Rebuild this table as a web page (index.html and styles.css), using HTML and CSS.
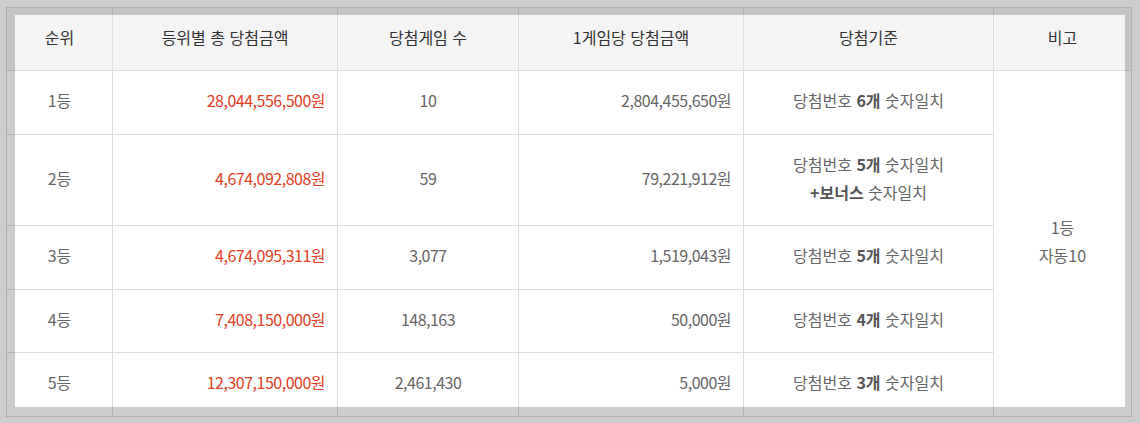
FILE: index.html
```html
<!DOCTYPE html>
<html lang="ko">
<head>
<meta charset="utf-8">
<title>당첨금 지급 내역</title>
<link rel="stylesheet" href="styles.css">
</head>
<body>
<div class="page">
  <table class="prize">
    <colgroup>
      <col class="c-rank">
      <col class="c-total">
      <col class="c-count">
      <col class="c-each">
      <col class="c-rule">
      <col class="c-note">
    </colgroup>
    <thead>
      <tr>
        <th>순위</th>
        <th>등위별 총 당첨금액</th>
        <th>당첨게임 수</th>
        <th>1게임당 당첨금액</th>
        <th>당첨기준</th>
        <th>비고</th>
      </tr>
    </thead>
    <tbody>
      <tr>
        <td>1등</td>
        <td class="num red">28,044,556,500원</td>
        <td class="cnt">10</td>
        <td class="num">2,804,455,650원</td>
        <td>당첨번호 <strong>6개</strong> 숫자일치</td>
        <td rowspan="5" class="note">1등<br>자동10</td>
      </tr>
      <tr>
        <td>2등</td>
        <td class="num red">4,674,092,808원</td>
        <td class="cnt">59</td>
        <td class="num">79,221,912원</td>
        <td>당첨번호 <strong>5개</strong> 숫자일치<br><strong>+보너스</strong> 숫자일치</td>
      </tr>
      <tr>
        <td>3등</td>
        <td class="num red">4,674,095,311원</td>
        <td class="cnt">3,077</td>
        <td class="num">1,519,043원</td>
        <td>당첨번호 <strong>5개</strong> 숫자일치</td>
      </tr>
      <tr>
        <td>4등</td>
        <td class="num red">7,408,150,000원</td>
        <td class="cnt">148,163</td>
        <td class="num">50,000원</td>
        <td>당첨번호 <strong>4개</strong> 숫자일치</td>
      </tr>
      <tr>
        <td>5등</td>
        <td class="num red">12,307,150,000원</td>
        <td class="cnt">2,461,430</td>
        <td class="num">5,000원</td>
        <td>당첨번호 <strong>3개</strong> 숫자일치</td>
      </tr>
    </tbody>
  </table>
  <div class="highlight"></div>
</div>
</body>
</html>
```

FILE: styles.css
```css
html, body {
  margin: 0;
  padding: 0;
  background: #ffffff;
}

body {
  font-family: "Noto Sans CJK KR", "Noto Sans", sans-serif;
  font-size: 16px;
  color: #666666;
  overflow: hidden;
}

.page {
  position: relative;
  width: 1140px;
  height: 423px;
  padding: 7px 0 0 6px;
  box-sizing: border-box;
}

.prize {
  width: 1125px;
  border-collapse: collapse;
  table-layout: fixed;
  border-top: 1px solid #333333;
}

.c-rank { width: 106px; }
.c-total { width: 225px; }
.c-count { width: 181px; }
.c-each { width: 225px; }
.c-rule { width: 250px; }
.c-note { width: 138px; }

.prize th,
.prize td {
  border: 1px solid #dddddd;
  text-align: center;
  vertical-align: middle;
  line-height: 28px;
  padding: 0 12px;
  font-weight: 400;
}

.prize th {
  background: #f4f4f4;
  color: #333333;
  padding-top: 0;
  padding-bottom: 4px;
}

.prize thead tr { height: 63px; }

.prize td {
  padding-top: 15.25px;
  padding-bottom: 19.25px;
}

.prize td.num,
.prize td.cnt {
  letter-spacing: -0.5px;
}

.prize td.num {
  text-align: right;
}

.prize td.red {
  color: #e3401f;
}

.prize strong {
  font-weight: 700;
  color: #555555;
}

.prize td.note {
  padding: 0 0 4px;
}

.highlight {
  position: absolute;
  left: 15px;
  top: 15px;
  width: 1110px;
  height: 392px;
  box-shadow: 0 0 0 2000px rgba(0, 0, 0, 0.2);
  pointer-events: none;
}
```
